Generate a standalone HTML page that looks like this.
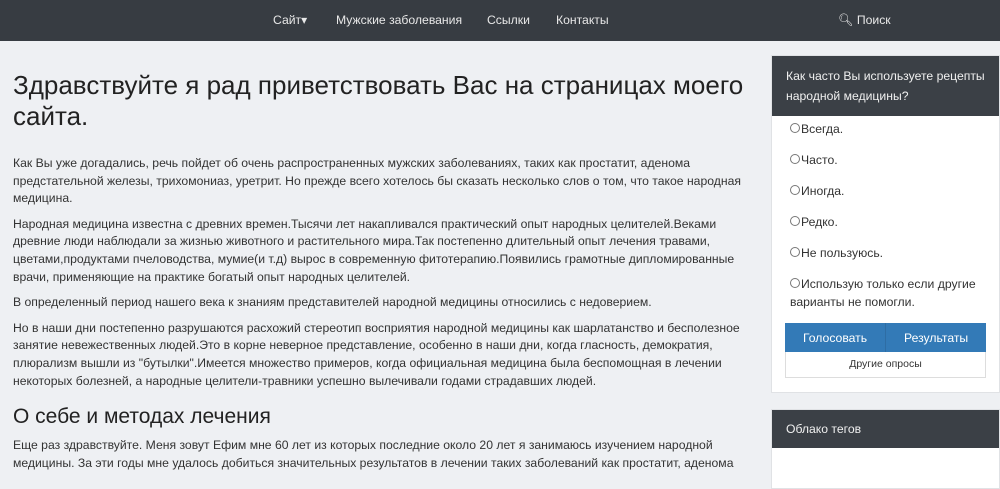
<!DOCTYPE html>
<html><head><meta charset="utf-8"><style>
*{box-sizing:border-box}
body{margin:0;width:1000px;height:467px;overflow:hidden;background:#eef0f3;font-family:"Liberation Sans",sans-serif;color:#333;font-size:12.2px}
.nav{height:41px;background:#373c42;position:relative;color:#e8e8e8;font-size:12.2px}
.nav span{position:absolute;top:13px}
.main{position:absolute;left:13px;top:41px;width:735px}
h1{font-weight:400;font-size:26px;line-height:31px;margin:29px 0 0;color:#222}
h2{font-weight:400;font-size:21px;margin:15px 0 8px;color:#222}
p{margin:0 0 8px;line-height:17.6px}
.panel{position:absolute;left:771px;width:229px;background:#fff;border:1px solid #e0e2e5}
.ph{background:#3b4046;color:#f0f0f0;padding:10px 14px;line-height:20px;font-size:12.2px}
.opt{margin-left:18px;line-height:18px}
.c{display:inline-block;width:10px;height:10px;border:1px solid #777;border-radius:50%;margin-right:1px;vertical-align:0}
.btns{position:absolute;left:13px;top:267px;width:201px;height:29px;background:#337ab7;color:#fff;font-size:12.2px}
.btns span{position:absolute;top:8px}
.other{position:absolute;left:13px;top:296px;width:201px;height:26px;border:1px solid #ddd;border-top:0;text-align:center;font-size:10.5px;line-height:24px}
</style></head><body>
<div class="nav"><span style="left:273px">Сайт▾</span><span style="left:336px">Мужские заболевания</span><span style="left:487px">Ссылки</span><span style="left:556px">Контакты</span><span style="left:838px">&#x1F50D;&#xFE0E; Поиск</span></div>
<div class="main">
<h1>Здравствуйте я рад приветствовать Вас на страницах моего сайта.</h1>
<div style="height:23px"></div>
<p>Как Вы уже догадались, речь пойдет об очень распространенных мужских заболеваниях, таких как простатит, аденома предстательной железы, трихомониаз, уретрит. Но прежде всего хотелось бы сказать несколько слов о том, что такое народная медицина.</p>
<p>Народная медицина известна с древних времен.Тысячи лет накапливался практический опыт народных целителей.Веками древние люди наблюдали за жизнью животного и растительного мира.Так постепенно длительный опыт лечения травами, цветами,продуктами пчеловодства, мумие(и т.д) вырос в современную фитотерапию.Появились грамотные дипломированные врачи, применяющие на практике богатый опыт народных целителей.</p>
<p>В определенный период нашего века к знаниям представителей народной медицины относились с недоверием.</p>
<p>Но в наши дни постепенно разрушаются расхожий стереотип восприятия народной медицины как шарлатанство и бесполезное занятие невежественных людей.Это в корне неверное представление, особенно в наши дни, когда гласность, демократия, плюрализм вышли из "бутылки".Имеется множество примеров, когда официальная медицина была беспомощная в лечении некоторых болезней, а народные целители-травники успешно вылечивали годами страдавших людей.</p>
<h2>О себе и методах лечения</h2>
<p>Еще раз здравствуйте. Меня зовут Ефим мне 60 лет из которых последние около 20 лет я занимаюсь изучением народной медицины. За эти годы мне удалось добиться значительных результатов в лечении таких заболеваний как простатит, аденома</p>
</div>
<div class="panel" style="top:55px;height:338px">
<div class="ph">Как часто Вы используете рецепты народной медицины?</div>
<div style="height:4px"></div>
<div class="opt" style="height:31px"><span class="c"></span>Всегда.</div>
<div class="opt" style="height:31px"><span class="c"></span>Часто.</div>
<div class="opt" style="height:31px"><span class="c"></span>Иногда.</div>
<div class="opt" style="height:31px"><span class="c"></span>Редко.</div>
<div class="opt" style="height:31px"><span class="c"></span>Не пользуюсь.</div>
<div class="opt"><span class="c"></span>Использую только если другие варианты не помогли.</div>
<div class="btns"><span style="left:18px">Голосовать</span><span style="left:100px;top:0;height:29px;border-left:1px solid #2e6da4"></span><span style="left:119px">Результаты</span></div>
<div class="other">Другие опросы</div>
</div>
<div class="panel" style="top:409px;height:80px">
<div class="ph" style="padding:9px 14px">Облако тегов</div>
</div>
</body></html>
